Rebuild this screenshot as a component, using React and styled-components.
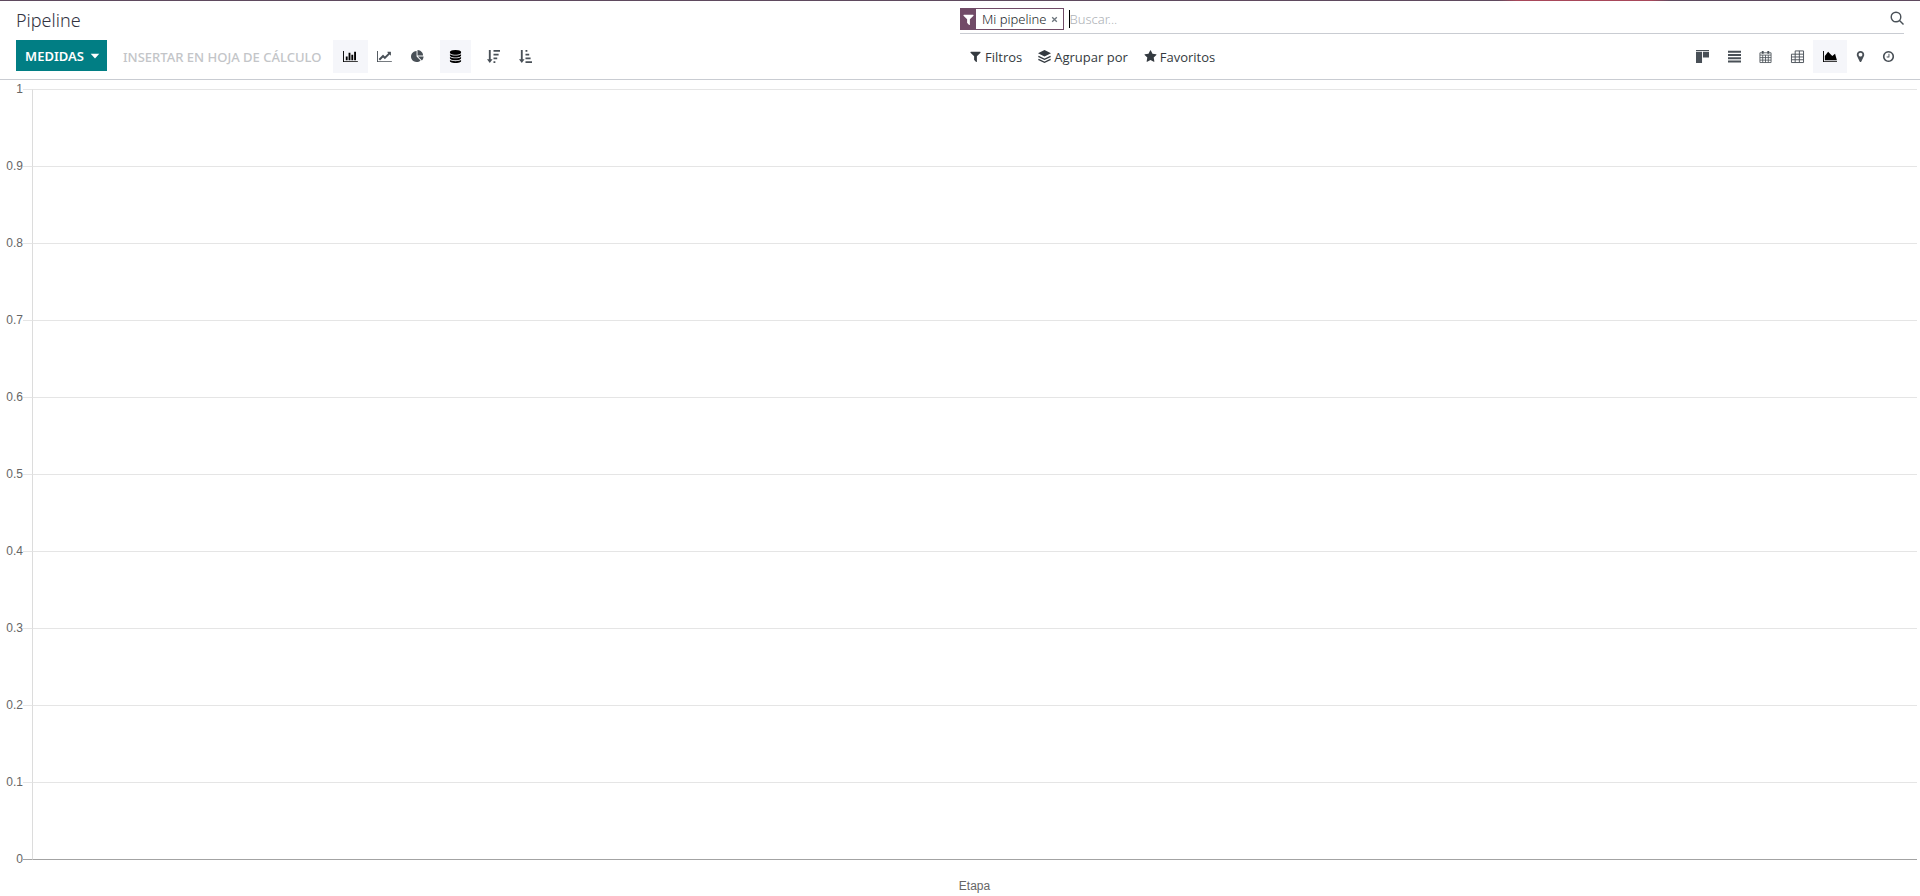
import React from "react";
import styled, { createGlobalStyle, css } from "styled-components";

const GlobalStyle = createGlobalStyle`
  * { box-sizing: border-box; }
  body {
    margin: 0;
    background: #fff;
    color: #495057;
    font: 13px/20px "Noto Sans", "Liberation Sans", sans-serif;
  }
  button, input { font: inherit; color: inherit; }
`;

const Page = styled.div`
  display: flex;
  flex-direction: column;
  min-height: 100vh;
`;

const TopLine = styled.div`
  height: 1px;
  background: linear-gradient(to right, #5f4a5f 78%, #a8485a 79%, #a8485a 86%, #5f4a5f 87%);
`;

const ControlPanel = styled.header`
  display: grid;
  grid-template-columns: 1fr 1fr;
  grid-template-rows: 33px 45px;
  padding: 0 16px;
  border-bottom: 1px solid #c9ccd2;
`;

const Title = styled.h1`
  margin: 0;
  font-size: 18px;
  font-weight: 300;
  line-height: 38px;
  color: #33333f;
`;

const SearchBar = styled.div`
  display: flex;
  align-items: center;
  height: 33px;
  padding: 7px 0 3px;
  border-bottom: 1px solid #c9ccd2;
`;

const Facet = styled.div`
  display: flex;
  align-items: center;
  height: 22px;
  border: 1px solid #714b67;
`;

const FacetIcon = styled.span`
  display: flex;
  align-items: center;
  justify-content: center;
  align-self: stretch;
  width: 15px;
  color: #fff;
  background: #714b67;
`;

const FacetLabel = styled.span`
  padding-left: 6px;
  color: #22262a;
  font-weight: 300;
`;

const PlainButton = styled.button`
  display: flex;
  align-items: center;
  justify-content: center;
  padding: 0;
  border: 0;
  background: none;
  cursor: pointer;
`;

const RemoveButton = styled(PlainButton)`
  width: 16px;
  color: #6c757d;
`;

const SearchInput = styled.input`
  flex: 1;
  min-width: 0;
  height: 18px;
  padding: 0;
  margin-left: 5px;
  border: 0;
  border-left: 1px solid #000;
  outline: 0;
  background: none;
  font-weight: 300;
  &::placeholder { color: #adb1b6; opacity: 1; }
`;

const Toolbar = styled.div`
  display: flex;
  align-items: flex-start;
  padding-top: 6px;
`;

const MeasuresButton = styled(PlainButton)`
  gap: 6px;
  width: 91px;
  height: 31px;
  padding-left: 2px;
  color: #fff;
  background: #017e84;
  font-weight: 600;
`;

const InsertButton = styled(PlainButton)`
  height: 33px;
  margin: 0 12px 0 16px;
  color: #c3c5c8;
  font-weight: 500;
`;

const IconButton = styled(PlainButton)`
  width: ${(p) => p.$width}px;
  height: 33px;
  color: #495057;
  ${(p) => p.$active && css`
    color: #000;
    background: #f5f6fa;
  `}
`;

const ButtonGroup = styled.div`
  display: flex;
  margin-right: ${(p) => p.$after || 0}px;
`;

const FilterBar = styled(Toolbar)`
  justify-content: space-between;
`;

const FilterMenu = styled.div`
  display: flex;
  gap: 16px;
  padding-left: 9px;
`;

const FilterButton = styled(PlainButton)`
  gap: 3px;
  height: 33px;
  color: #343a40;
  font-family: "Open Sans", "Noto Sans", sans-serif;
`;

const Graph = styled.main`
  display: flex;
  flex: 1;
  flex-direction: column;
  padding: 9px 3px 0 0;
  color: #666;
  font: 12px/14px "Liberation Sans", Arial, sans-serif;
`;

const Band = styled.div`
  display: flex;
  flex: ${(p) => (p.$base ? "0 0 1px" : "1 0 20px")};
  --line: ${(p) => (p.$base ? "#a3a3a3" : "#e5e5e5")};
`;

const AxisLabel = styled.span`
  width: 23px;
  height: 0;
  line-height: 0;
  text-align: right;
`;

const Tick = styled.span`
  width: 9px;
  border-top: 1px solid var(--line);
`;

const PlotCell = styled.span`
  flex: 1;
  border-top: 1px solid var(--line);
  border-left: 1px solid #dcdcdc;
`;

const AxisTitle = styled.div`
  height: 36px;
  padding: 19px 0 0 32px;
  text-align: center;
`;

const Svg = styled.svg`
  display: block;
  flex: none;
  fill: currentColor;
`;

const glyphs = {
  bar: [2048, "M640 896v512h-256v-512h256zm384-512v1024h-256v-1024h256zm1024 1152v128h-2048v-1536h128v1408h1920zm-640-896v768h-256v-768h256zm384-384v1152h-256v-1152h256z"],
  line: [2048, "M2048 1536v128h-2048v-1536h128v1408h1920zm-128-1248v435q0 21-19.5 29.5t-35.5-7.5l-121-121-633 633q-10 10-23 10t-23-10l-233-233-416 416-192-192 585-585q10-10 23-10t23 10l233 233 464-464-121-121q-16-16-7.5-35.5t29.5-19.5h435q14 0 23 9t9 23z"],
  pie: [1792, "M768 890l546 546q-106 108-247.5 168t-298.5 60q-209 0-385.5-103t-279.5-279.5-103-385.5 103-385.5 279.5-279.5 385.5-103v762zm187 6h773q0 157-60 298.5t-168 247.5zm709-128h-768v-768q209 0 385.5 103t279.5 279.5 103 385.5z"],
  area: [2048, "M2048 1536v128h-2048v-1536h128v1408h1920zm-384-1024l256 896h-1664v-576l448-576 576 576z"],
  database: [1792, "M896 768q237 0 443-43t325-127v170q0 69-103 128t-280 93.5-385 34.5-385-34.5-280-93.5-103-128v-170q119 84 325 127t443 43zm0 768q237 0 443-43t325-127v170q0 69-103 128t-280 93.5-385 34.5-385-34.5-280-93.5-103-128v-170q119 84 325 127t443 43zm0-384q237 0 443-43t325-127v170q0 69-103 128t-280 93.5-385 34.5-385-34.5-280-93.5-103-128v-170q119 84 325 127t443 43zm0-1152q208 0 385 34.5t280 93.5 103 128v128q0 69-103 128t-280 93.5-385 34.5-385-34.5-280-93.5-103-128v-128q0-69 103-128t280-93.5 385-34.5z"],
  filter: [1792, "M1595 295q17 41-14 70l-493 493v742q0 42-39 59-13 5-25 5-27 0-45-19l-256-256q-19-19-19-45v-486l-493-493q-31-29-14-70 17-39 59-39h1280q42 0 59 39z"],
  star: [1792, "M1728 647q0 22-26 48l-363 354 86 500q1 7 1 20 0 21-10.5 35.5t-30.5 14.5q-19 0-40-12l-449-236-449 236q-22 12-40 12-21 0-31.5-14.5t-10.5-35.5q0-6 2-20l86-500-364-354q-25-27-25-48 0-37 56-46l502-73 225-455q19-41 49-41t49 41l225 455 502 73q56 9 56 46z"],
  marker: [1792, "M1152 640q0-106-75-181t-181-75-181 75-75 181 75 181 181 75 181-75 75-181zm256 0q0 109-33 179l-364 774q-16 33-47.5 52t-67.5 19-67.5-19-46.5-52l-365-774q-33-70-33-179 0-212 150-362t362-150 362 150 150 362z"],
  clock: [1792, "M1024 544v448q0 14-9 23t-23 9h-320q-14 0-23-9t-9-23v-64q0-14 9-23t23-9h224v-352q0-14 9-23t23-9h64q14 0 23 9t9 23zm416 352q0-148-73-273t-198-198-273-73-273 73-198 198-73 273 73 273 198 198 273 73 273-73 198-198 73-273zm224 0q0 209-103 385.5t-279.5 279.5-385.5 103-385.5-103-279.5-279.5-103-385.5 103-385.5 279.5-279.5 385.5-103 385.5 103 279.5 279.5 103 385.5z"],
};

const shapes = {
  sortDesc: <path d="M2 0h2v10h2L3 14 0 10h2zM7 0h7v2H7zM7 4h5.500v2H7zM7 8h4v2H7zM7 12h2v2H7z" />,
  sortAsc: <path d="M2 0h2v10h2L3 14 0 10h2zM7 0h2v2H7zM7 4h4v2H7zM7 8h5.500v2H7zM7 12h7v2H7z" />,
  kanban: <path d="M0 0h14v1H0zM0 2h6.500v12H0zM7.500 2H14v6H7.500z" />,
  list: <path d="M0 .8h14v2.200H0zM0 4.300h14v2.200H0zM0 7.800h14v2.200H0zM0 11.300h14v2.200H0z" />,
  calendar: (
    <g fill="none" stroke="currentColor">
      <path d="M1 3h12v10.500H1zM1 5.500h12M4 5.500v8M7 5.500v8M10 5.500v8M1 8.200h12M1 10.900h12" strokeWidth=".9" />
      <path d="M4 1v3M10 1v3" strokeWidth="2" />
    </g>
  ),
  pivot: (
    <path d="M4.500 1h9v12.500h-13V4.500h13M.5 7.500h13M.5 10.500h13M4.500 1v12.500M9 1v12.500" fill="none" stroke="currentColor" />
  ),
  layers: (
    <g>
      <path d="M7 0l7 3.500L7 7 0 3.500z" />
      <path d="M.4 6.800L7 10l6.600-3.200M.4 10L7 13.200 13.600 10" fill="none" stroke="currentColor" strokeWidth="1.500" />
    </g>
  ),
  search: (
    <g fill="none" stroke="currentColor" strokeWidth="1.400">
      <circle cx="6" cy="5" r="4.800" />
      <path d="M9.500 8.500l4 4" />
    </g>
  ),
  caret: <path d="M1 4h12L7 10.500z" />,
  cross: <path d="M4.500 4.500l5 5M9.500 4.500l-5 5" fill="none" stroke="currentColor" strokeWidth="1.400" />,
};

function Icon({ name, size = 14 }) {
  const glyph = glyphs[name];
  if (glyph) {
    return (
      <Svg width={(size * glyph[0]) / 1792} height={size} viewBox={`0 0 ${glyph[0]} 1792`} aria-hidden="true">
        <path d={glyph[1]} />
      </Svg>
    );
  }
  return (
    <Svg width={size} height={size} viewBox="0 0 14 14" overflow="visible" aria-hidden="true">
      {shapes[name]}
    </Svg>
  );
}

const chartTypes = [
  { icon: "bar", label: "Gráfico de barras", width: 35, active: true },
  { icon: "line", label: "Gráfico de líneas", width: 33 },
  { icon: "pie", label: "Gráfico circular", width: 33 },
];

const sortings = [
  { icon: "database", label: "Apilado", width: 31, active: true },
  { icon: "sortDesc", label: "Descendente", width: 45 },
  { icon: "sortAsc", label: "Ascendente", width: 19 },
];

const filters = [
  { icon: "filter", label: "Filtros" },
  { icon: "layers", label: "Agrupar por" },
  { icon: "star", label: "Favoritos" },
];

const views = [
  { icon: "kanban", label: "Kanban", width: 32 },
  { icon: "list", label: "Lista", width: 32 },
  { icon: "calendar", label: "Calendario", width: 31 },
  { icon: "pivot", label: "Pivote", width: 32 },
  { icon: "area", label: "Gráfico", width: 34, active: true },
  { icon: "marker", label: "Mapa", width: 26 },
  { icon: "clock", label: "Actividad", width: 31 },
];

const ticks = ["1", "0.9", "0.8", "0.7", "0.6", "0.5", "0.4", "0.3", "0.2", "0.1"];

function IconGroup({ items, after }) {
  return (
    <ButtonGroup $after={after}>
      {items.map((item) => (
        <IconButton key={item.icon} type="button" aria-label={item.label} $width={item.width} $active={item.active}>
          <Icon name={item.icon} size={13} />
        </IconButton>
      ))}
    </ButtonGroup>
  );
}

export default function App() {
  return (
    <Page>
      <GlobalStyle />
      <TopLine />
      <ControlPanel>
        <Title>Pipeline</Title>
        <SearchBar role="search">
          <Facet>
            <FacetIcon><Icon name="filter" size={13} /></FacetIcon>
            <FacetLabel>Mi pipeline</FacetLabel>
            <RemoveButton type="button" aria-label="Eliminar"><Icon name="cross" size={13} /></RemoveButton>
          </Facet>
          <SearchInput type="text" placeholder="Buscar..." aria-label="Buscar" />
          <PlainButton type="button" aria-label="Buscar"><Icon name="search" /></PlainButton>
        </SearchBar>
        <Toolbar>
          <MeasuresButton type="button">MEDIDAS<Icon name="caret" size={10} /></MeasuresButton>
          <InsertButton type="button" disabled>INSERTAR EN HOJA DE CÁLCULO</InsertButton>
          <IconGroup items={chartTypes} after={6} />
          <IconGroup items={sortings} />
        </Toolbar>
        <FilterBar>
          <FilterMenu>
            {filters.map((f) => (
              <FilterButton key={f.icon} type="button">
                <Icon name={f.icon} size={13} />{f.label}
              </FilterButton>
            ))}
          </FilterMenu>
          <IconGroup items={views} />
        </FilterBar>
      </ControlPanel>
      <Graph>
        {ticks.map((t) => (
          <Band key={t}>
            <AxisLabel>{t}</AxisLabel>
            <Tick />
            <PlotCell />
          </Band>
        ))}
        <Band $base>
          <AxisLabel>0</AxisLabel>
          <Tick />
          <PlotCell />
        </Band>
        <AxisTitle>Etapa</AxisTitle>
      </Graph>
    </Page>
  );
}
